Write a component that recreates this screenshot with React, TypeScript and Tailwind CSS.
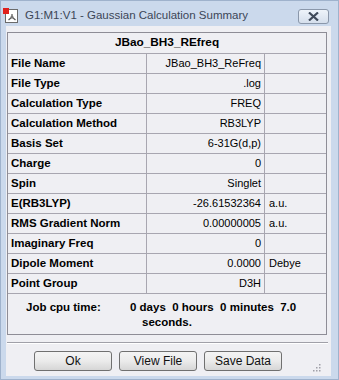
import React from 'react';

const rows: [string, string, string][] = [
  ['File Name', 'JBao_BH3_ReFreq', ''],
  ['File Type', '.log', ''],
  ['Calculation Type', 'FREQ', ''],
  ['Calculation Method', 'RB3LYP', ''],
  ['Basis Set', '6-31G(d,p)', ''],
  ['Charge', '0', ''],
  ['Spin', 'Singlet', ''],
  ['E(RB3LYP)', '-26.61532364', 'a.u.'],
  ['RMS Gradient Norm', '0.00000005', 'a.u.'],
  ['Imaginary Freq', '0', ''],
  ['Dipole Moment', '0.0000', 'Debye'],
  ['Point Group', 'D3H', ''],
];

const AppIcon = () => (
  <svg width="16" height="16" viewBox="0 0 16 16">
    <rect x="2.5" y="1.5" width="12" height="13" fill="#ffffff" stroke="#6b6b6b" />
    <rect x="0" y="0" width="6" height="6" fill="#e0201c" />
    <line x1="9" y1="6" x2="9" y2="9" stroke="#555" strokeWidth="1.2" />
    <line x1="9" y1="9" x2="5.5" y2="12" stroke="#555" strokeWidth="1.2" />
    <line x1="9" y1="9" x2="12.5" y2="12" stroke="#555" strokeWidth="1.2" />
    <circle cx="9" cy="9" r="1.5" fill="#777" />
  </svg>
);

const Button = ({ label }: { label: string }) => (
  <div className="w-[78px] h-[20px] rounded-[3px] border border-[#707070] bg-gradient-to-b from-[#f4f4f4] via-[#ebebeb] to-[#d6d6d6] flex items-center justify-center text-[12px] text-[#111]">
    {label}
  </div>
);

export default function App() {
  return (
    <div
      className="w-[339px] h-[380px] bg-[#cbd9ec] flex flex-col border border-[#9fb2cc] overflow-hidden"
      style={{ fontFamily: '"Liberation Sans", Arial, sans-serif' }}
    >
      {/* Title bar */}
      <div className="h-[25px] flex items-center relative shrink-0">
        <div className="ml-[2px] mt-[4px]">
          <AppIcon />
        </div>
        <span className="ml-[6px] mt-[4px] text-[11.5px] text-[#3b4657]">G1:M1:V1 - Gaussian Calculation Summary</span>
        <div className="absolute left-[297px] top-[8px] w-[31px] h-[15px] rounded-[3px] border border-[#8a97aa] bg-gradient-to-b from-[#eef3fa] to-[#d5dfec] flex items-center justify-center">
          <svg width="11" height="9" viewBox="0 0 11 9">
            <path d="M1 0.5 L10 8.5 M10 0.5 L1 8.5" stroke="#3f4a5a" strokeWidth="2.2" />
          </svg>
        </div>
      </div>

      {/* Client area */}
      <div className="flex-1 ml-[5px] mr-[7px] mb-[3px] bg-[#efeff3] relative">
        <div className="mt-[6px] ml-[1px] w-[320px] border border-[#8e8d96] text-black">
          <div className="h-[21px] border-b border-[#a8a6b0] flex items-center justify-center font-bold text-[11.8px]">
            JBao_BH3_REfreq
          </div>
          {rows.map(([label, value, unit]) => (
            <div key={label} className="h-[20px] border-b border-[#a8a6b0] flex">
              <div className="w-[139px] border-r border-[#a8a6b0] flex items-center pl-[3px] font-bold text-[11.5px]">
                {label}
              </div>
              <div className="w-[118px] border-r border-[#a8a6b0] flex items-center justify-end pr-[3px] text-[11px]">
                {value}
              </div>
              <div className="w-[61px] flex items-center pl-[4px] text-[11px]">{unit}</div>
            </div>
          ))}
          <div className="h-[40px] pt-[6px] flex font-bold text-[11.5px] leading-[15px]">
            <div className="w-[122px] pl-[18px]">Job cpu time:</div>
            <div className="flex flex-col whitespace-pre">
              <span>0 days  0 hours  0 minutes  7.0</span>
              <span className="ml-[12px]">seconds.</span>
            </div>
          </div>
        </div>

        <div className="mt-[7px] ml-[1px] w-[321px] h-[2px] border-t border-[#a0a0a8] border-b border-b-white" />

        <div className="mt-[7px] ml-[28px] flex gap-[7px]">
          <Button label="Ok" />
          <Button label="View File" />
          <Button label="Save Data" />
        </div>

        <svg className="absolute right-[10px] bottom-[4px]" width="10" height="10" viewBox="0 0 10 10">
          {[[8, 2], [5, 5], [8, 5], [2, 8], [5, 8], [8, 8]].map(([x, y], i) => (
            <rect key={i} x={x} y={y} width="1.5" height="1.5" fill="#a0a0a8" />
          ))}
        </svg>
      </div>
    </div>
  );
}
